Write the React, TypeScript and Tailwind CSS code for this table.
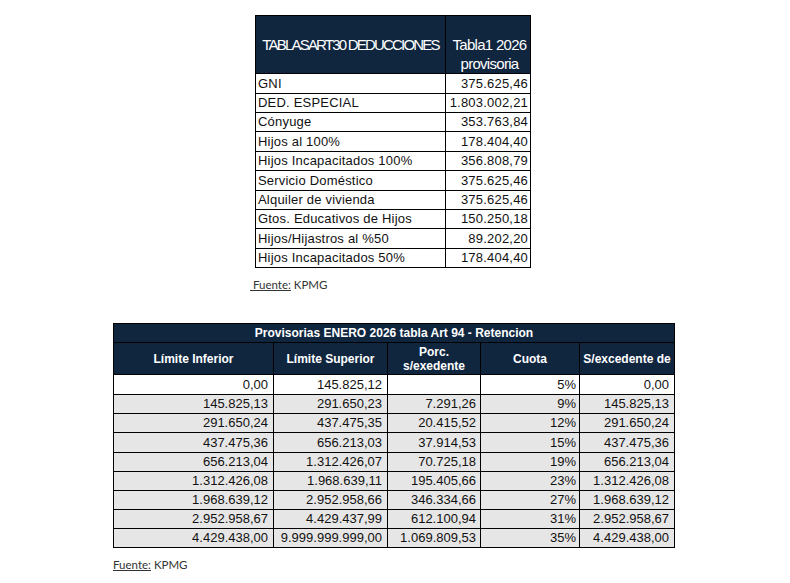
import React from "react";

const topRows: [string, string, number][] = [
  ["GNI", "375.625,46", 20],
  ["DED. ESPECIAL", "1.803.002,21", 19],
  ["Cónyuge", "353.763,84", 19],
  ["Hijos al 100%", "178.404,40", 20],
  ["Hijos Incapacitados 100%", "356.808,79", 19],
  ["Servicio Doméstico", "375.625,46", 20],
  ["Alquiler de vivienda", "375.625,46", 19],
  ["Gtos. Educativos de Hijos", "150.250,18", 19],
  ["Hijos/Hijastros al %50", "89.202,20", 20],
  ["Hijos Incapacitados 50%", "178.404,40", 18],
];

const bottomRows: string[][] = [
  ["0,00", "145.825,12", "", "5%", "0,00"],
  ["145.825,13", "291.650,23", "7.291,26", "9%", "145.825,13"],
  ["291.650,24", "437.475,35", "20.415,52", "12%", "291.650,24"],
  ["437.475,36", "656.213,03", "37.914,53", "15%", "437.475,36"],
  ["656.213,04", "1.312.426,07", "70.725,18", "19%", "656.213,04"],
  ["1.312.426,08", "1.968.639,11", "195.405,66", "23%", "1.312.426,08"],
  ["1.968.639,12", "2.952.958,66", "346.334,66", "27%", "1.968.639,12"],
  ["2.952.958,67", "4.429.437,99", "612.100,94", "31%", "2.952.958,67"],
  ["4.429.438,00", "9.999.999.999,00", "1.069.809,53", "35%", "4.429.438,00"],
];
const bottomHeights = [20, 19, 19, 20, 19, 19, 19, 19, 18];

export default function App() {
  return (
    <div
      className="w-[790px] h-[583px] bg-white overflow-hidden pt-[15px] text-[#111]"
      style={{ fontFamily: '"Liberation Sans", Arial, sans-serif' }}
    >
      {/* Top table */}
      <div className="ml-[255px] w-[276px] border border-black">
        <div className="flex h-[58px] border-b border-black bg-[#10263f] text-white text-[15px]">
          <div className="w-[190px] border-r border-black flex items-center justify-center tracking-[-1.8px] whitespace-nowrap pt-[1px]">
            TABLASART30 DEDUCCIONES
          </div>
          <div className="flex-1 flex flex-col items-center pt-[19px] pl-[3px] leading-[19px] tracking-[-0.7px] whitespace-nowrap">
            <span>Tabla1 2026</span>
            <span>provisoria</span>
          </div>
        </div>
        {topRows.map(([label, value, h], i) => (
          <div
            key={label}
            className={`flex text-[13px] tracking-[0.2px] ${i < topRows.length - 1 ? "border-b border-black" : ""}`}
            style={{ height: h }}
          >
            <div className="w-[190px] border-r border-black flex items-center pl-[2px] whitespace-nowrap">
              {label}
            </div>
            <div className="flex-1 flex items-center justify-end pr-[2px] whitespace-nowrap">
              {value}
            </div>
          </div>
        ))}
      </div>

      <div
        className="ml-[250px] mt-[8px] h-[18px] leading-[18px] text-[11.5px] text-[#333]"
        style={{ fontFamily: 'Lato, "Open Sans", sans-serif' }}
      >
        <span className="underline">&nbsp;Fuente:</span> KPMG
      </div>

      {/* Bottom table */}
      <div className="ml-[113px] mt-[29px] w-[562px] border border-black">
        <div className="h-[19px] border-b border-black bg-[#10263f] text-white text-[12px] font-bold flex items-center justify-center whitespace-nowrap">
          Provisorias ENERO 2026 tabla Art 94 - Retencion
        </div>
        <div className="flex h-[32px] border-b border-black bg-[#10263f] text-white text-[12px] font-bold">
          <div className="w-[160px] border-r border-black flex items-center justify-center">Límite Inferior</div>
          <div className="w-[114px] border-r border-black flex items-center justify-center">Límite Superior</div>
          <div className="w-[93px] border-r border-black flex flex-col items-center justify-center leading-[14px]">
            <span>Porc.</span>
            <span>s/exedente</span>
          </div>
          <div className="w-[99px] border-r border-black flex items-center justify-center">Cuota</div>
          <div className="flex-1 flex items-center justify-center whitespace-nowrap">S/excedente de</div>
        </div>
        {bottomRows.map((r, i) => (
          <div
            key={i}
            className={`flex text-[13px] ${i === 0 ? "bg-white" : "bg-[#e7e6e6]"} ${i < bottomRows.length - 1 ? "border-b border-black" : ""}`}
            style={{ height: bottomHeights[i] }}
          >
            <div className="w-[160px] border-r border-black flex items-center justify-end pr-[5px] whitespace-nowrap">{r[0]}</div>
            <div className="w-[114px] border-r border-black flex items-center justify-end pr-[5px] whitespace-nowrap">{r[1]}</div>
            <div className="w-[93px] border-r border-black flex items-center justify-end pr-[4px] whitespace-nowrap">{r[2]}</div>
            <div className="w-[99px] border-r border-black flex items-center justify-end pr-[3px] whitespace-nowrap">{r[3]}</div>
            <div className="flex-1 flex items-center justify-end pr-[5px] whitespace-nowrap">{r[4]}</div>
          </div>
        ))}
      </div>

      <div
        className="ml-[113px] mt-[8px] h-[18px] leading-[18px] text-[11.5px] text-[#333]"
        style={{ fontFamily: 'Lato, "Open Sans", sans-serif' }}
      >
        <span className="underline">Fuente:</span> KPMG
      </div>
    </div>
  );
}
